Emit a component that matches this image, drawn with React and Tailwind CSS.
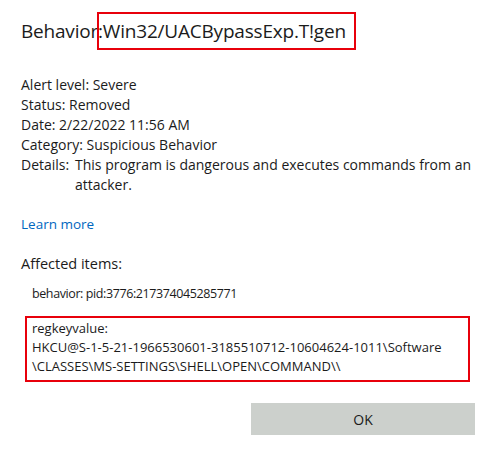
const App = () => {
  return (
    <div className="w-[499px] h-[456px] bg-white text-[#1b1b1b] pt-[13px] pl-[21px]" style={{ fontFamily: '"Segoe UI", "Open Sans", sans-serif' }}>
      {/* Title */}
      <h1 className="h-[36px] leading-[36px] text-[19px] tracking-[-0.2px] font-normal whitespace-nowrap">
        Behavior:
        <span className="relative">
          Win32/UACBypassExp.T!gen
          <span className="absolute -left-[6px] -right-[10px] top-[-6px] bottom-[-6px] border-2 border-[#e8000b]"></span>
        </span>
      </h1>

      {/* Alert info */}
      <div className="mt-[26px] text-[14px] leading-[20px]">
        <p>Alert level: Severe</p>
        <p>Status: Removed</p>
        <p>Date: 2/22/2022 11:56 AM</p>
        <p>Category: Suspicious Behavior</p>
        <div className="flex">
          <span className="w-[54px] shrink-0">Details:</span>
          <span className="w-[410px]">This program is dangerous and executes commands from an attacker.</span>
        </div>
      </div>

      <a href="#" className="block mt-[19px] text-[13.5px] leading-[20px] text-[#0067c0]">Learn more</a>

      <p className="mt-[20px] text-[14.5px] leading-[20px]">Affected items:</p>

      <p className="mt-[10px] pl-[11px] text-[12.5px] tracking-[-0.4px] leading-[20px]">behavior: pid:3776:217374045285771</p>

      <div className="mt-[12px] ml-[4px] w-[445px] border-2 border-[#e8000b] pl-[5px] pt-[1px] pb-[4px] text-[13px] leading-[19px]">
        <p>regkeyvalue:</p>
        <p>HKCU@S-1-5-21-1966530601-3185510712-10604624-1011\Software</p>
        <p>\CLASSES\MS-SETTINGS\SHELL\OPEN\COMMAND\\</p>
      </div>

      <div className="flex justify-end pr-[24px] mt-[21px]">
        <button className="w-[224px] h-[32px] bg-[#ccd0cc] text-[14px] text-[#1b1b1b]">OK</button>
      </div>
    </div>
  );
};

export default App;
